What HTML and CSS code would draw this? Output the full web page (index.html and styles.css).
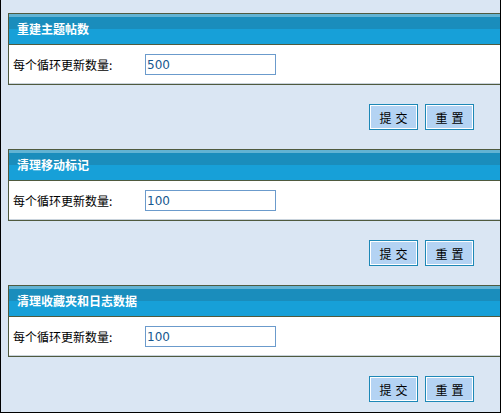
FILE: index.html
```html
<!DOCTYPE html>
<html lang="zh-CN">
<head>
<meta charset="utf-8">
<title>数据维护</title>
<link rel="stylesheet" href="styles.css">
</head>
<body>
<div class="frame">
  <form class="section">
    <div class="panel">
      <div class="panel-head">重建主题帖数</div>
      <div class="panel-row">
        <label class="label">每个循环更新数量:</label>
        <input class="field" type="text" value="500">
      </div>
    </div>
    <div class="actions">
      <button type="button" class="btn">提交</button>
      <button type="button" class="btn">重置</button>
    </div>
  </form>
  <form class="section">
    <div class="panel">
      <div class="panel-head">清理移动标记</div>
      <div class="panel-row">
        <label class="label">每个循环更新数量:</label>
        <input class="field" type="text" value="100">
      </div>
    </div>
    <div class="actions">
      <button type="button" class="btn">提交</button>
      <button type="button" class="btn">重置</button>
    </div>
  </form>
  <form class="section">
    <div class="panel">
      <div class="panel-head">清理收藏夹和日志数据</div>
      <div class="panel-row">
        <label class="label">每个循环更新数量:</label>
        <input class="field" type="text" value="100">
      </div>
    </div>
    <div class="actions">
      <button type="button" class="btn">提交</button>
      <button type="button" class="btn">重置</button>
    </div>
  </form>
</div>
</body>
</html>
```

FILE: styles.css
```css
* { box-sizing: border-box; }

html, body {
  margin: 0;
  padding: 0;
  background: #dae6f3;
}

body {
  font-family: "Noto Sans CJK SC", "Liberation Sans", sans-serif;
  font-size: 12px;
  color: #000;
}

.frame {
  height: 413px;
  border-left: 1px solid #000;
  border-right: 1px solid #000;
  border-bottom: 1px solid #000;
  overflow: hidden;
  padding-top: 13px;
}

.section {
  margin: 0;
  display: flex;
  flex-direction: column;
}

.panel {
  margin-left: 7px;
  margin-right: -10px;
  border: 1px solid #4f5a3e;
  background: #fff;
}

.panel-head {
  height: 31px;
  border-bottom: 1px solid #4f5a3e;
  background: linear-gradient(#62b3d3 0, #62b3d3 3px, #1a8dbc 3px, #1a8dbc 15px, #17a0d8 15px, #17a0d8 100%);
  color: #fff;
  font-weight: bold;
  font-size: 12px;
  line-height: 30px;
  padding-left: 8px;
}

.panel-row {
  height: 39px;
  border-bottom: 1px solid #c9d3dc;
  display: flex;
  align-items: center;
  padding-left: 4px;
  padding-top: 1px;
}

.label {
  width: 132px;
  font-size: 12px;
}

.field {
  width: 131px;
  height: 21px;
  border: 1px solid #6b9bcc;
  padding: 0 0 0 1px;
  font-family: "DejaVu Sans", "Liberation Sans", sans-serif;
  font-size: 12px;
  color: #17588f;
  background: #fff;
  outline: none;
}

.actions {
  display: flex;
  justify-content: flex-end;
  gap: 7px;
  padding: 19px 26px 19px 0;
}

.btn {
  width: 49px;
  height: 26px;
  margin: 0;
  border: 1px solid #1d88b6;
  box-shadow: inset 0 0 0 1px #fff;
  background: #b4d3f3;
  font-family: "Noto Sans CJK SC", "Liberation Sans", sans-serif;
  font-size: 12px;
  color: #000;
  letter-spacing: 4px;
  text-indent: 4px;
  padding: 0;
  text-align: center;
  cursor: pointer;
}
```
